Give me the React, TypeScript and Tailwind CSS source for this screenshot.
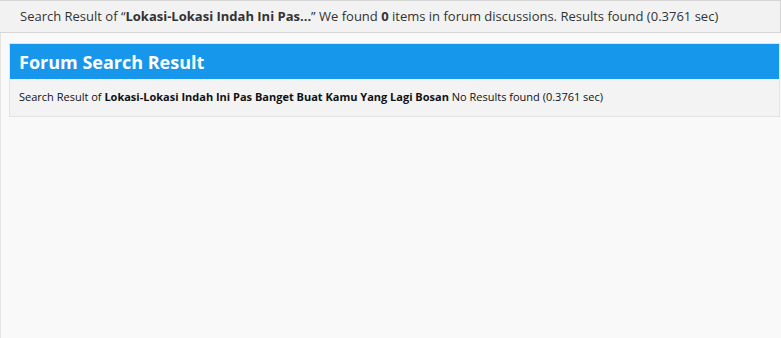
export default function App() {
  return (
    <div className="min-h-[338px] w-[781px] bg-[#f9f9f9] font-['Open_Sans',sans-serif]">
      <div className="flex h-[33px] items-center border-y border-r border-[#d6d6d6] bg-[#f2f2f2] pl-5 text-[13px] text-[#333]">
        <span>
          Search Result of “<b className="font-bold">Lokasi-Lokasi Indah Ini Pas...</b>” We found <b>0</b> items in
          forum discussions. Results found (0.3761 sec)
        </span>
      </div>
      <div className="min-h-[305px] border-l border-[#e3e3e3] pt-[10px] pl-2 pr-[1px]">
        <div className="border border-[#e3e3e3] bg-[#f3f3f3]">
          <div className="flex h-[35px] items-center bg-[#1797eb] px-[9px] pt-[1px] text-[18px] font-bold text-white">
            Forum Search Result
          </div>
          <div className="px-[9px] py-[10px] text-[11px] text-[#111]">
            Search Result of <b>Lokasi-Lokasi Indah Ini Pas Banget Buat Kamu Yang Lagi Bosan</b> No Results found
            (0.3761 sec)
          </div>
        </div>
      </div>
    </div>
  )
}
